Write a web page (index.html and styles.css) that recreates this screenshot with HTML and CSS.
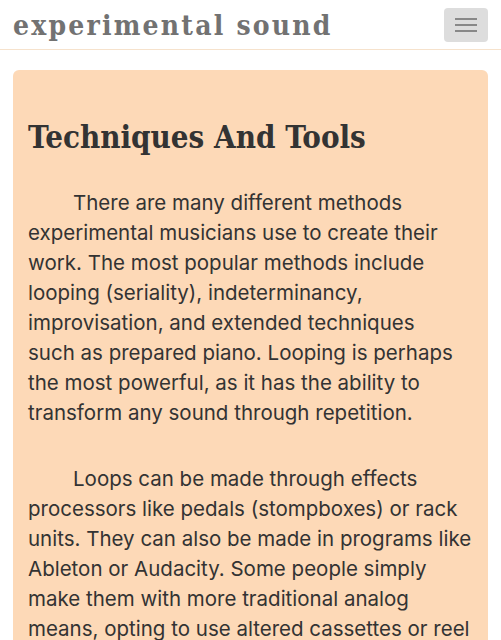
FILE: index.html
```html
<!DOCTYPE html>
<html lang="en">
<head>
<meta charset="utf-8">
<title>experimental sound</title>
<link rel="stylesheet" href="styles.css">
</head>
<body>
<header class="navbar">
  <span class="brand">experimental sound</span>
  <button class="toggler" aria-label="Toggle navigation">
    <span class="bar"></span><span class="bar"></span><span class="bar"></span>
  </button>
</header>
<main class="content">
  <section class="card">
    <h2 class="card-title">Techniques And Tools</h2>
    <p class="card-text">There are many different methods experimental musicians use to create their work. The most popular methods include looping (seriality), indeterminancy, improvisation, and extended techniques such&nbsp;as prepared piano. Looping is perhaps the most powerful, as it has the ability to transform any sound through repetition.</p>
    <p class="card-text">Loops can be made through effects processors like pedals (stompboxes) or rack units. They can also be made in programs like Ableton or Audacity. Some people simply make them with more traditional analog means, opting to use altered cassettes or reel to reel tape machines to create loops by hand.</p>
  </section>
</main>
</body>
</html>
```
FILE: styles.css
```css
html, body { margin: 0; padding: 0; background: #fff; }
body { font-family: Inter, "Noto Sans", sans-serif; color: #333; }

.navbar {
  height: 50px;
  box-sizing: border-box;
  border-bottom: 1px solid #f6e2cc;
  display: flex;
  align-items: center;
  justify-content: space-between;
  padding: 0 13px 0 13px;
}
.brand {
  font-family: "DejaVu Serif Condensed", "DejaVu Serif", serif;
  font-stretch: condensed;
  font-weight: bold;
  font-size: 28px;
  letter-spacing: 2.2px;
  color: #727272;
  line-height: 1;
  margin-top: 2px;
}
.toggler {
  width: 44px;
  height: 34px;
  background: #dddddd;
  border: none;
  border-radius: 4px;
  padding: 0;
  display: flex;
  flex-direction: column;
  align-items: center;
  justify-content: center;
  gap: 4px;
}
.bar { display: block; width: 22px; height: 2px; background: #888; }

.content { padding: 20px 13px 0 13px; }
.card {
  background: #fdd9b7;
  border-radius: 6px;
  padding: 47px 15px 20px 15px;
}
.card-title {
  font-family: "DejaVu Serif Condensed", "DejaVu Serif", serif;
  font-stretch: condensed;
  font-weight: bold;
  font-size: 31px;
  line-height: 40px;
  margin: 0 0 31px 0;
  color: #333;
}
.card-text {
  font-size: 20.5px;
  line-height: 30px;
  text-indent: 45px;
  margin: 0 0 36px 0;
  color: #333;
}
```
